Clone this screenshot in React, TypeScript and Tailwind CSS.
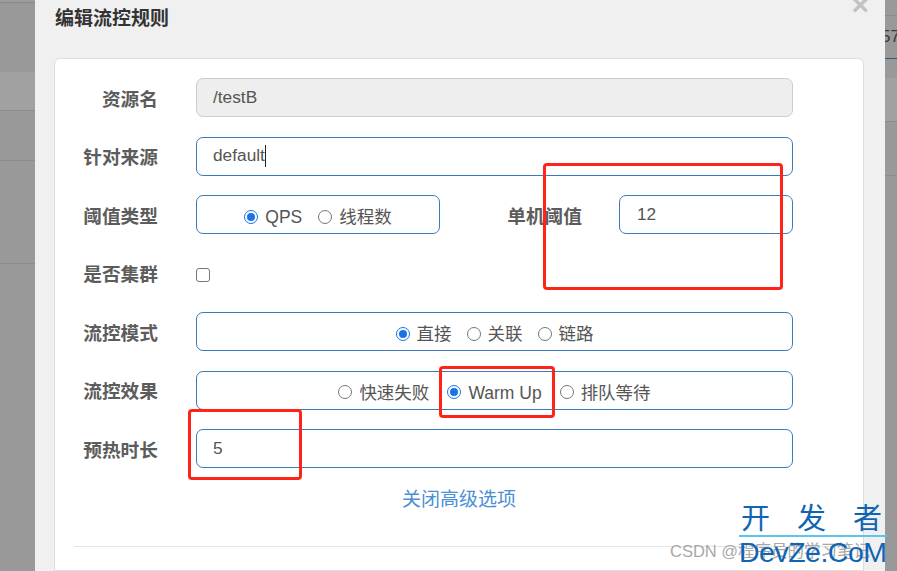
import React from 'react';

const cjk = { fontFamily: '"Liberation Sans", "Noto Sans CJK SC", sans-serif' };

function Radio({ checked, label }: { checked?: boolean; label: string }) {
    return (
        <span className="flex items-center gap-[7px]">
            {checked ? (
                <span className="w-[14px] h-[14px] rounded-full border-[1.5px] border-[#1a73e8] bg-white flex items-center justify-center">
                    <span className="w-[8px] h-[8px] rounded-full bg-[#1a73e8]" />
                </span>
            ) : (
                <span className="w-[14px] h-[14px] rounded-full border border-[#767676] bg-white" />
            )}
            <span className="text-[17.5px] text-[#555] pt-[2px]">{label}</span>
        </span>
    );
}

function Label({ children, w = 'w-[103px]' }: { children: React.ReactNode; w?: string }) {
    return <div className={`${w} shrink-0 text-right pt-[5px] text-[18.7px] font-bold text-[#5c5c5c]`}>{children}</div>;
}

export default function App() {
    return (
        <div className="w-[897px] h-[571px] overflow-hidden relative flex bg-[#999]" style={cjk}>
            {/* backdrop on the left */}
            <div className="w-[35px] shrink-0 flex flex-col">
                <div className="h-[2px] bg-[#9c9c9c]" />
                <div className="h-px bg-[#8a8a8a]" />
                <div className="h-[69px] bg-[#999]" />
                <div className="h-[38px] bg-[#a1a1a1]" />
                <div className="h-px bg-[#8c8c8c]" />
                <div className="h-[49px] bg-[#999]" />
                <div className="h-px bg-[#8c8c8c]" />
                <div className="h-[102px] bg-[#999]" />
                <div className="h-px bg-[#8c8c8c]" />
                <div className="flex-1 bg-[#999]" />
            </div>

            {/* modal */}
            <div className="w-[850px] shrink-0 bg-[#f0f0f0] flex flex-col">
                <div className="h-[58px] shrink-0 px-[20px] flex justify-between">
                    <h1 className="text-[19px] font-bold text-[#333] leading-none pt-[9px]">编辑流控规则</h1>
                    <span className="text-[30px] font-bold text-[#c2c2c2] leading-none -mt-[10px] -mr-[4px]">×</span>
                </div>

                <div className="ml-[19px] w-[810px] flex-1 bg-white border border-[#ddd] rounded-t-[6px]">
                    <div className="flex flex-col gap-[19.5px] pt-[19px]">
                        <div className="flex items-center h-[39px]">
                            <Label>资源名</Label>
                            <div className="ml-[38px] w-[597px] h-[39px] rounded-[7px] border border-[#ccc] bg-[#eee] flex items-center px-[16px] text-[17.3px] text-[#555]">
                                /testB
                            </div>
                        </div>

                        <div className="flex items-center h-[39px]">
                            <Label>针对来源</Label>
                            <div className="ml-[38px] w-[597px] h-[39px] rounded-[7px] border border-[#3c7ab8] flex items-center px-[16px] text-[17.3px] text-[#555]">
                                default<span className="w-px h-[22px] bg-[#222]" />
                            </div>
                        </div>

                        <div className="flex items-center h-[39px]">
                            <Label>阈值类型</Label>
                            <div className="ml-[38px] w-[244px] h-[39px] rounded-[7px] border border-[#3c7ab8] flex items-center justify-center gap-[16px] pt-[4px]">
                                <Radio checked label="QPS" />
                                <Radio label="线程数" />
                            </div>
                            <Label w="w-[142px]">单机阈值</Label>
                            <div className="ml-[37px] w-[174px] h-[39px] rounded-[7px] border border-[#3c7ab8] flex items-center px-[17px] text-[17.3px] text-[#555]">
                                12
                            </div>
                        </div>

                        <div className="flex items-center h-[39px]">
                            <Label>是否集群</Label>
                            <span className="ml-[38px] mt-[3px] w-[14px] h-[14px] rounded-[3px] border border-[#767676] bg-white" />
                        </div>

                        <div className="flex items-center h-[39px]">
                            <Label>流控模式</Label>
                            <div className="ml-[38px] w-[597px] h-[39px] rounded-[7px] border border-[#3c7ab8] flex items-center justify-center gap-[15px] pt-[4px]">
                                <Radio checked label="直接" />
                                <Radio label="关联" />
                                <Radio label="链路" />
                            </div>
                        </div>

                        <div className="flex items-center h-[39px]">
                            <Label>流控效果</Label>
                            <div className="ml-[38px] w-[597px] h-[39px] rounded-[7px] border border-[#3c7ab8] flex items-center justify-center gap-[18px] pt-[4px]">
                                <Radio label="快速失败" />
                                <Radio checked label="Warm Up" />
                                <Radio label="排队等待" />
                            </div>
                        </div>

                        <div className="flex items-center h-[39px]">
                            <Label>预热时长</Label>
                            <div className="ml-[38px] w-[597px] h-[39px] rounded-[7px] border border-[#3c7ab8] flex items-center px-[16px] text-[17.3px] text-[#555]">
                                5
                            </div>
                        </div>
                    </div>

                    <div className="mt-[20px] text-center leading-[24px] text-[19px] text-[#4a8fd3]">
                        关闭高级选项
                    </div>

                    <div className="mt-[34px] ml-[19px] mr-[19px] h-px bg-[#e5e5e5]" />
                </div>
            </div>

            {/* backdrop on the right */}
            <div className="flex-1 flex flex-col overflow-hidden">
                <div className="h-[15px] bg-[#999]" />
                <div className="h-px bg-[#8a8a8a]" />
                <div className="h-[42px] bg-[#999] flex items-center text-[17px] text-[#3a3a3a] whitespace-nowrap">
                    <span className="-ml-[4px]">57</span>
                </div>
                <div className="h-px bg-[#2f5b85]" />
                <div className="h-[19px] bg-[#999]" />
                <div className="h-[43px] bg-[#a1a1a1]" />
                <div className="h-px bg-[#8c8c8c]" />
                <div className="h-[53px] bg-[#999]" />
                <div className="h-px bg-[#8c8c8c]" />
                <div className="flex-1 bg-[#999]" />
            </div>

            {/* red annotation boxes */}
            <div className="absolute left-[543px] top-[163px] w-[240px] h-[127px] border-[3.5px] border-[#ff2419] rounded-[4px]" />
            <div className="absolute left-[439px] top-[366px] w-[116px] h-[52px] border-[3.5px] border-[#ff2419] rounded-[4px]" />
            <div className="absolute left-[188px] top-[409px] w-[114px] h-[71px] border-[3.5px] border-[#ff2419] rounded-[4px]" />

            {/* watermarks */}
            <div className="absolute left-[670px] top-[540px] text-[16.5px] text-[#a8a8a8] whitespace-nowrap leading-[22px]">
                CSDN @程序员的学习笔记
            </div>
            <div className="absolute left-[739px] top-[502px] w-[148px] flex flex-col items-stretch">
                <div className="flex justify-between text-[29px] leading-[34px] text-[#0f64b4] pl-[2px] pr-[5px]">
                    <span>开</span>
                    <span>发</span>
                    <span>者</span>
                </div>
                <div className="h-[2px] bg-[#5cc6ea] mt-[-1px]" />
                <div className="text-[28.5px] leading-[28px] text-[#0f64b4] whitespace-nowrap tracking-[-0.5px] mt-[1px]">DevZe.CoM</div>
            </div>
        </div>
    );
}
